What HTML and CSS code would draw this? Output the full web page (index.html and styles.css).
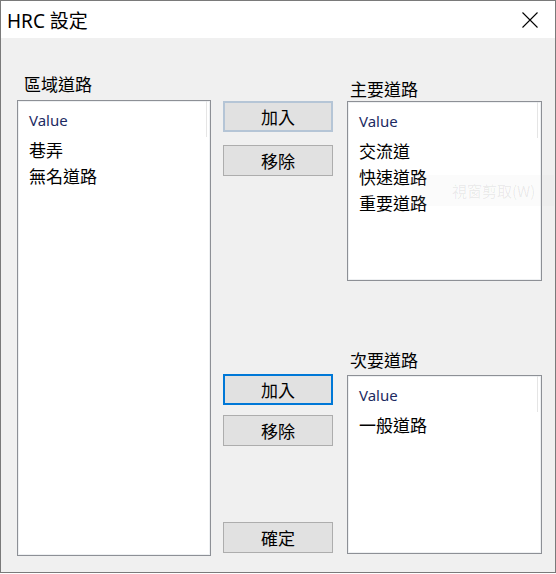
FILE: index.html
```html
<!DOCTYPE html>
<html>
<head>
  <title>HRC 設定</title>
  <link rel="stylesheet" href="styles.css">
</head>
<body>
  <div class="window">
    <div class="titlebar">
      <span class="title">HRC 設定</span>
      <svg class="close" width="16" height="16" viewBox="0 0 16 16">
        <path d="M0.5 0.5 L15.5 15.5 M15.5 0.5 L0.5 15.5" stroke="#000" stroke-width="1.1" fill="none"/>
      </svg>
    </div>

    <div class="content">
      <div class="col col-left">
        <div class="label label-left">區域道路</div>
        <div class="listbox listbox-full">
          <div class="list-header"><span>Value</span></div>
          <div class="item">巷弄</div>
          <div class="item">無名道路</div>
        </div>
      </div>

      <div class="col col-mid">
        <button class="btn btn-default btn-add1">加入</button>
        <button class="btn btn-remove1">移除</button>
        <button class="btn btn-focus btn-add2">加入</button>
        <button class="btn btn-remove2">移除</button>
        <button class="btn btn-ok">確定</button>
      </div>

      <div class="col col-right">
        <div class="label label-main">主要道路</div>
        <div class="listbox listbox-main">
          <div class="list-header"><span>Value</span></div>
          <div class="item">交流道</div>
          <div class="item">快速道路</div>
          <div class="item">重要道路</div>
        </div>
        <div class="label label-minor">次要道路</div>
        <div class="listbox listbox-minor">
          <div class="list-header"><span>Value</span></div>
          <div class="item">一般道路</div>
        </div>
      </div>

      <!-- faint tooltip left over from the screen capture -->
      <div class="ghost-tip">視窗剪取(W)</div>
    </div>
  </div>
</body>
</html>
```

FILE: styles.css
```css
html, body {
  margin: 0;
  padding: 0;
  background: #fff;
}

body {
  font-family: "Noto Sans", "Noto Sans CJK TC", sans-serif;
}

.window {
  width: 556px;
  height: 573px;
  box-sizing: border-box;
  border: 1px solid #7a7a7a;
  display: flex;
  flex-direction: column;
}

.titlebar {
  height: 37px;
  background: #fff;
  display: flex;
  align-items: center;
  justify-content: space-between;
  padding: 0 17px 0 6px;
}

.title {
  font-size: 19px;
  color: #000;
}

.close {
  display: block;
}

.content {
  flex: 1;
  background: #f0f0f0;
  display: flex;
  padding: 0 0 16px 16px;
  position: relative;
}

.col {
  display: flex;
  flex-direction: column;
}

.col-left {
  width: 194px;
}

.col-mid {
  width: 110px;
  margin-left: 12px;
}

.col-right {
  width: 195px;
  margin-left: 14px;
}

.label {
  font-family: "Noto Sans CJK TC", sans-serif;
  font-size: 17px;
  line-height: 20px;
  color: #000;
}

.label-left {
  margin-top: 36px;
  height: 20px;
  margin-bottom: 6px;
  padding-left: 7px;
}

.label-main {
  margin-top: 41px;
  margin-bottom: 2px;
  padding-left: 3px;
}

.label-minor {
  margin-top: 69px;
  margin-bottom: 5px;
  padding-left: 3px;
}

.listbox {
  background: #fff;
  border: 1px solid #8d9096;
  box-shadow: inset 0 0 0 1px #eef0f2;
  box-sizing: border-box;
}

.listbox-full {
  flex: 1;
}

.listbox-main {
  height: 180px;
}

.listbox-minor {
  height: 179px;
}

.list-header {
  height: 36px;
  margin-right: 3px;
  border-right: 1px solid #e5e5e5;
  display: flex;
  align-items: center;
  padding-left: 11px;
}

.list-header span {
  font-family: "Noto Sans", sans-serif;
  font-size: 15px;
  color: #1d2a62;
  margin-top: 1px;
}

.item {
  font-family: "Noto Sans CJK TC", sans-serif;
  font-size: 17px;
  line-height: 26px;
  color: #000;
  padding-left: 11px;
}

.listbox-main .item:first-of-type {
  margin-top: 1px;
}

.btn {
  display: block;
  width: 110px;
  height: 31px;
  box-sizing: border-box;
  background: #e1e1e1;
  border: 1px solid #adadad;
  font-family: "Noto Sans CJK TC", sans-serif;
  font-size: 17px;
  color: #000;
  padding: 0;
  margin: 0;
}

.btn-default {
  border: 2px solid #b5c5d6;
}

.btn-focus {
  border: 2px solid #0078d7;
}

.btn-add1 {
  margin-top: 63px;
}

.btn-remove1 {
  margin-top: 13px;
}

.btn-add2 {
  margin-top: 198px;
}

.btn-remove2 {
  margin-top: 10px;
}

.btn-ok {
  margin-top: 76px;
}

.ghost-tip {
  position: absolute;
  left: 411px;
  top: 137px;
  width: 142px;
  height: 31px;
  box-sizing: border-box;
  padding-left: 40px;
  line-height: 31px;
  font-family: "Noto Sans CJK TC", sans-serif;
  font-size: 15px;
  color: rgba(0, 0, 0, 0.08);
  background: rgba(200, 200, 200, 0.07);
  white-space: nowrap;
}
```
